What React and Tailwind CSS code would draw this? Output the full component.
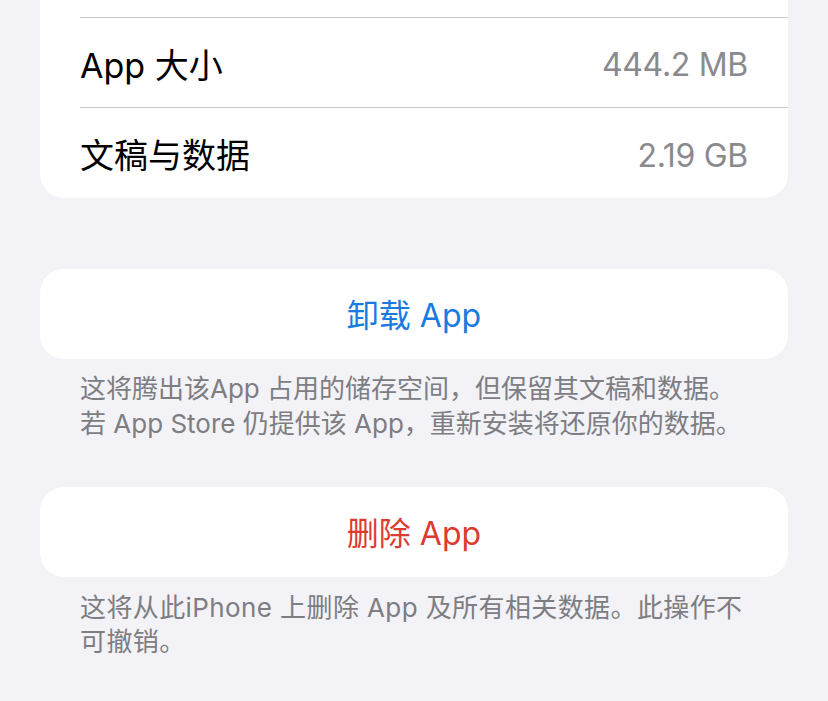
import React from "react";

// iOS-style storage settings screen (bottom part).
const font = { fontFamily: '"Inter", "Noto Sans CJK SC", sans-serif' };

const rows = [
  { label: "App 大小", value: "444.2 MB" },
  { label: "文稿与数据", value: "2.19 GB" },
];

const ActionCard = ({ label, color }) => (
  <div className="mx-[40px] flex h-[90px] items-center justify-center rounded-[24px] bg-white pt-[3px]">
    <span className={`text-[32px] ${color}`}>{label}</span>
  </div>
);

const App = () => {
  return (
    <div className="min-h-screen w-full overflow-hidden bg-[#f2f2f7]" style={font}>
      {/* info card, top is scrolled off */}
      <div className="mx-[40px] rounded-b-[24px] bg-white pl-[40px]">
        <div className="h-[18px] border-b border-[#c8c8cc]" />
        {rows.map((r, i) => (
          <div
            key={r.label}
            className={`flex h-[90px] items-center justify-between pr-[40px] pt-[5px] ${
              i < rows.length - 1 ? "border-b border-[#c8c8cc]" : ""
            }`}
          >
            <span className="text-[34px] text-black">{r.label}</span>
            <span className="text-[32px] tracking-[-0.3px] text-[#8a8a8e]">{r.value}</span>
          </div>
        ))}
      </div>

      <div className="h-[71px]" />
      <ActionCard label="卸载 App" color="text-[#1a7ae0]" />
      <p className="mt-[12px] px-[80px] text-[26px] leading-[35px] text-[#7d7d82]">
        这将腾出该App 占用的储存空间，但保留其文稿和数据。
        <br />
        若 App Store 仍提供该 App，重新安装将还原你的数据。
      </p>

      <div className="h-[46px]" />
      <ActionCard label="删除 App" color="text-[#dc3b31]" />
      <p className="mt-[14px] px-[80px] text-[26px] leading-[34px] tracking-[0.4px] text-[#7d7d82]">
        这将从此iPhone 上删除 App 及所有相关数据。此操作不
        <br />
        可撤销。
      </p>
    </div>
  );
};

export default App;
